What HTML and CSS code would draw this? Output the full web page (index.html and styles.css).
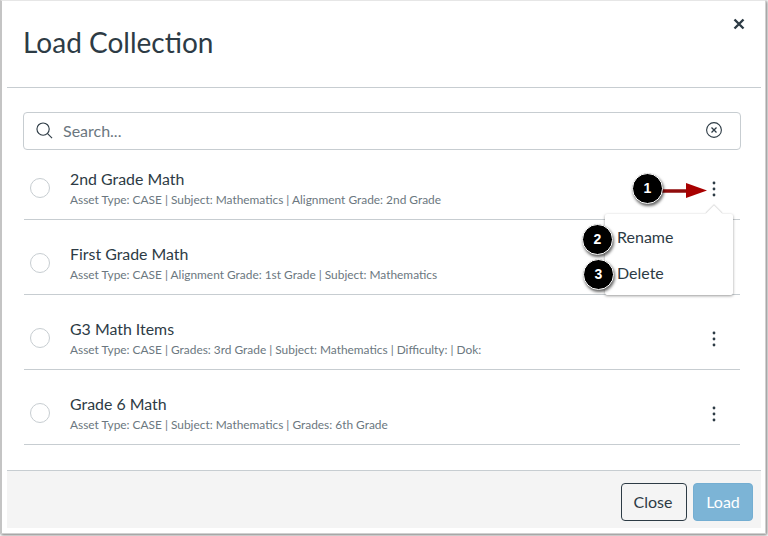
FILE: index.html
```html
<!DOCTYPE html>
<html lang="en">
<head>
    <meta charset="UTF-8">
    <title>Load Collection</title>
    <link rel="stylesheet" href="styles.css">
</head>
<body>
    <div class="modal">
        <div class="modal-header">
            <h1 class="modal-title">Load Collection</h1>
            <svg class="close-icon" width="12" height="12" viewBox="0 0 12 12">
                <path d="M1.5 1.5L10.5 10.5M10.5 1.5L1.5 10.5" stroke="#2d3b45" stroke-width="2.4" fill="none"/>
            </svg>
        </div>

        <div class="modal-body">
            <div class="search-box">
                <svg width="17" height="17" viewBox="0 0 18 18" fill="none" stroke="#2d3b45" stroke-width="1.2">
                    <circle cx="7.5" cy="7.5" r="6.5"/>
                    <path d="M12 12L17 17"/>
                </svg>
                <span class="search-text">Search...</span>
                <svg class="clear-icon" width="16" height="16" viewBox="0 0 16 16" fill="none" stroke="#2d3b45" stroke-width="1.1">
                    <circle cx="8" cy="8" r="7.4"/>
                    <path d="M5.5 5.5L10.5 10.5M10.5 5.5L5.5 10.5" stroke-width="1.3"/>
                </svg>
            </div>

            <div class="row">
                <div class="radio"></div>
                <div class="row-info">
                    <div class="row-title">2nd Grade Math</div>
                    <div class="row-meta">Asset Type: CASE | Subject: Mathematics | Alignment Grade: 2nd Grade</div>
                </div>
                <svg class="dots" width="4" height="16" viewBox="0 0 4 16" fill="#2d3b45"><circle cx="2" cy="2" r="1.4"/><circle cx="2" cy="8" r="1.4"/><circle cx="2" cy="14" r="1.4"/></svg>
            </div>
            <div class="row">
                <div class="radio"></div>
                <div class="row-info">
                    <div class="row-title">First Grade Math</div>
                    <div class="row-meta">Asset Type: CASE | Alignment Grade: 1st Grade | Subject: Mathematics</div>
                </div>
            </div>
            <div class="row">
                <div class="radio"></div>
                <div class="row-info">
                    <div class="row-title">G3 Math Items</div>
                    <div class="row-meta">Asset Type: CASE | Grades: 3rd Grade | Subject: Mathematics | Difficulty: | Dok:</div>
                </div>
                <svg class="dots" width="4" height="16" viewBox="0 0 4 16" fill="#2d3b45"><circle cx="2" cy="2" r="1.4"/><circle cx="2" cy="8" r="1.4"/><circle cx="2" cy="14" r="1.4"/></svg>
            </div>
            <div class="row">
                <div class="radio"></div>
                <div class="row-info">
                    <div class="row-title">Grade 6 Math</div>
                    <div class="row-meta">Asset Type: CASE | Subject: Mathematics | Grades: 6th Grade</div>
                </div>
                <svg class="dots" width="4" height="16" viewBox="0 0 4 16" fill="#2d3b45"><circle cx="2" cy="2" r="1.4"/><circle cx="2" cy="8" r="1.4"/><circle cx="2" cy="14" r="1.4"/></svg>
            </div>
        </div>

        <div class="modal-footer">
            <button class="btn btn-close">Close</button>
            <button class="btn btn-load">Load</button>
        </div>
    </div>

    <!-- menu and callouts sit on top of the list -->
    <div class="menu">
        <div class="menu-item">Rename</div>
        <div class="menu-item">Delete</div>
    </div>
    <svg class="arrow" width="46" height="16" viewBox="0 0 46 16">
        <path d="M0 8H26" stroke="#8f0b0b" stroke-width="3.5"/>
        <path d="M24 0L45 7.5L24 15Z" fill="#a80000"/>
    </svg>
    <div class="callout callout-1">1</div>
    <div class="callout callout-2">2</div>
    <div class="callout callout-3">3</div>
</body>
</html>
```

FILE: styles.css
```css
* {
    margin: 0;
    padding: 0;
    box-sizing: border-box;
}

body {
    font-family: Lato, Arial, sans-serif;
    background: white;
    color: #2d3b45;
    width: 768px;
    height: 536px;
    position: relative;
    overflow: hidden;
}

.modal {
    width: 766px;
    height: 534px;
    background: white;
    border: 1px solid #d0d0d0;
    border-left: 2px solid #c4c4c4;
    border-top: 1px solid #e6e6e6;
    box-shadow: 1px 1px 3px rgba(0,0,0,0.55);
    padding: 0 4px 5px 5px;
    display: flex;
    flex-direction: column;
}

.modal-header {
    height: 87px;
    border-bottom: 1px solid #c7cdd1;
    padding: 22px 16px 0;
    display: flex;
    justify-content: space-between;
    align-items: flex-start;
}

.modal-title {
    font-size: 28px;
    font-weight: 400;
    line-height: 38px;
}

.close-icon {
    margin: -5px 0 0 0;
}

.modal-body {
    flex: 1;
    padding: 24px 20px 0 16px;
}

.search-box {
    height: 38px;
    border: 1px solid #c7cdd1;
    border-radius: 4px;
    display: flex;
    align-items: center;
    padding: 0 18px 2px 12px;
    gap: 10px;
}

.search-text {
    flex: 1;
    font-size: 16px;
    color: #6b7780;
}

.row {
    height: 75px;
    margin-left: 1px;
    margin-right: 1px;
    border-bottom: 1px solid #c7cdd1;
    display: flex;
    align-items: center;
    padding: 12px 24px 0 6px;
}

.search-box + .row {
    height: 70px;
    padding-top: 7px;
}

.radio {
    width: 20px;
    height: 20px;
    border: 1px solid #c7cdd1;
    border-radius: 50%;
    margin-right: 20px;
}

.row-info {
    flex: 1;
}

.row-title {
    font-size: 15.9px;
    line-height: 21px;
    margin-bottom: 2px;
}

.row-meta {
    font-size: 11.9px;
    line-height: 18px;
    color: #6b7780;
}

.dots {
    margin-top: 2px;
}

.modal-footer {
    height: 58px;
    background: #f4f4f4;
    border-top: 1px solid #c7cdd1;
    display: flex;
    justify-content: flex-end;
    align-items: center;
    gap: 6px;
    padding: 5px 8px 1px;
}

.btn {
    height: 38px;
    border-radius: 4px;
    font-family: Lato, Arial, sans-serif;
    font-size: 16px;
}

.btn-close {
    width: 66px;
    background: #f4f4f4;
    border: 1px solid #2d3b45;
    color: #2d3b45;
    padding-right: 2px;
}

.btn-load {
    width: 60px;
    background: #7cb4d6;
    border: 1px solid #74aed2;
    color: white;
}

.menu {
    position: absolute;
    left: 605px;
    top: 214px;
    width: 128px;
    height: 81px;
    background: white;
    border-radius: 2px;
    box-shadow: 0 1px 3px rgba(0,0,0,0.4);
    padding-top: 5px;
}

.menu::before {
    content: "";
    position: absolute;
    left: 103px;
    top: -6px;
    width: 12px;
    height: 12px;
    background: white;
    transform: rotate(45deg);
    box-shadow: -1px -1px 1px rgba(0,0,0,0.12);
}

.menu-item {
    position: relative;
    height: 36px;
    line-height: 35px;
    font-size: 16px;
    padding-left: 12px;
}

.arrow {
    position: absolute;
    left: 662px;
    top: 183px;
}

.callout {
    position: absolute;
    width: 31px;
    height: 31px;
    border-radius: 50%;
    background: black;
    border: 1px solid white;
    box-shadow: 1px 2px 3px rgba(0,0,0,0.6);
    color: white;
    font-family: "Liberation Sans", Arial, sans-serif;
    font-size: 14px;
    font-weight: bold;
    line-height: 29px;
    text-align: center;
}

.callout-1 { left: 632px; top: 173px; }
.callout-2 { left: 582px; top: 224px; }
.callout-3 { left: 583px; top: 259px; }
```
